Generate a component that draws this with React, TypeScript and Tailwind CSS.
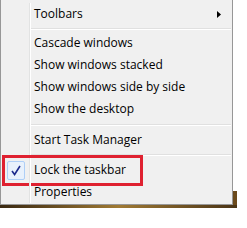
import React from 'react';

type Row =
  | { kind: 'item'; label: string; submenu?: boolean; checked?: boolean }
  | { kind: 'sep'; h: string };

const rows: Row[] = [
  { kind: 'item', label: 'Toolbars', submenu: true },
  { kind: 'sep', h: 'h-[7px]' },
  { kind: 'item', label: 'Cascade windows' },
  { kind: 'item', label: 'Show windows stacked' },
  { kind: 'item', label: 'Show windows side by side' },
  { kind: 'item', label: 'Show the desktop' },
  { kind: 'sep', h: 'h-[9px]' },
  { kind: 'item', label: 'Start Task Manager' },
  { kind: 'sep', h: 'h-[8px]' },
  { kind: 'item', label: 'Lock the taskbar', checked: true },
  { kind: 'item', label: 'Properties' },
];

const MenuRow: React.FC<{ row: Row }> = ({ row }) => {
  if (row.kind === 'sep') {
    return (
      <div className={`flex ${row.h}`}>
        <div className="w-[29px] border-r border-[#e2e3e3]" />
        <div className="flex-1 border-l border-white flex flex-col justify-center pr-[1px]">
          <div className="h-[1px] bg-[#e0e0e0]" />
          <div className="h-[1px] bg-white" />
        </div>
      </div>
    );
  }
  return (
    <div className="relative flex h-[22px]">
      <div className="w-[29px] border-r border-[#e2e3e3] flex items-center justify-end pr-[4px]">
        {row.checked && (
          <div className="w-[18px] h-[19px] rounded-[2px] border border-[#aecff7] bg-[#e8f1fc] flex items-center justify-center">
            <svg width="10" height="11" viewBox="0 0 10 11">
              <path d="M1 6 L3.6 9.5 L9 1" fill="none" stroke="#1c2a8c" strokeWidth="1.6" />
            </svg>
          </div>
        )}
      </div>
      <div className="flex-1 border-l border-white flex items-center pl-[3px] pr-[11px]">
        <span className="flex-1 text-[12px] text-black leading-none">{row.label}</span>
        {row.submenu && (
          <svg width="4" height="7" viewBox="0 0 4 7">
            <path d="M0 0 L4 3.5 L0 7 Z" fill="#000" />
          </svg>
        )}
      </div>
      {row.checked && (
        <div className="absolute left-[1px] top-[-4px] w-[141px] h-[31px] border-[3px] border-[#df2130]" />
      )}
    </div>
  );
};

export default function App() {
  return (
    <div
      className="w-[247px] h-[228px] bg-white overflow-hidden"
      style={{ fontFamily: '"Open Sans", "Noto Sans", sans-serif' }}
    >
      <div className="flex">
        <div className="w-[233px] bg-[#f0f0f0] border-l border-r border-b border-[#979797] pt-[3px] pb-[1px]">
          {rows.map((r, i) => (
            <MenuRow key={i} row={r} />
          ))}
        </div>
        <div className="w-[4px] flex flex-col">
          <div className="flex-1" />
          <div className="h-[14px] bg-[#6b4a1c]" />
        </div>
      </div>
      <div className="w-[237px] h-[3px] bg-gradient-to-r from-[#3b2a12] via-[#a07a34] to-[#4a3416]" />
    </div>
  );
}
